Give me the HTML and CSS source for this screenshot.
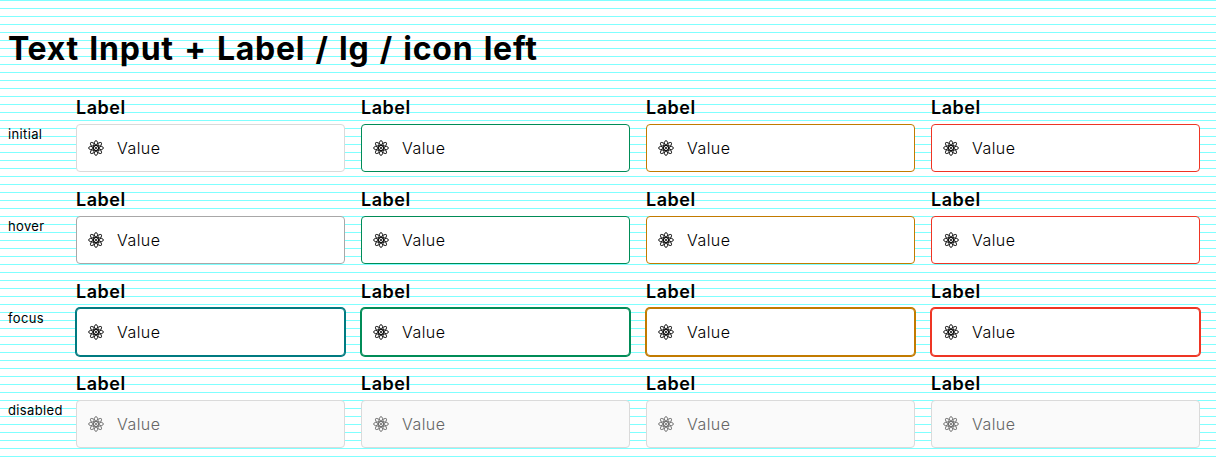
FILE: index.html
```html
<!DOCTYPE html>
<html lang="en">
<head>
<meta charset="utf-8">
<title>Text Input + Label / lg / icon left</title>
<link rel="stylesheet" href="styles.css">
</head>
<body>
<h1 class="title">Text Input + Label / lg / icon left</h1>
<main class="states" id="states"></main>
<script src="main.js"></script>
</body>
</html>
```
FILE: styles.css
```css
* { box-sizing: border-box; }

body {
  margin: 0;
  padding: 25px 16px 0 8px;
  height: 464px;
  overflow: hidden;
  font-family: Inter, "Noto Sans", sans-serif;
  color: #000;
  background: #fff repeating-linear-gradient(#80ffff 0 1px, #fff 1px 8px);
}

.title {
  margin: 0 0 23px;
  font-size: 32px;
  line-height: 48px;
  font-weight: 750;
  letter-spacing: 0.75px;
  word-spacing: 2px;
  white-space: nowrap;
}

.states { display: grid; gap: 16px; }

.row {
  display: grid;
  grid-template-columns: 68px 1fr;
  align-items: center;
}

.state-name { font-size: 13px; line-height: 20px; letter-spacing: 0.35px; }

.fields { display: grid; grid-template-columns: repeat(4, 1fr); gap: 16px; }

.label {
  display: block;
  margin-bottom: 4px;
  font-size: 18px;
  line-height: 24px;
  font-weight: 600;
  letter-spacing: 0.5px;
}

.control {
  display: flex;
  align-items: center;
  gap: 13px;
  height: 48px;
  padding-left: 11px;
  border: 1px solid #dadada;
  border-radius: 4px;
  background: #fff;
  font-size: 16px;
  font-weight: 350;
  letter-spacing: 0.45px;
}

.icon { width: 16px; height: 16px; }

.hover .control { border-color: #a8a8a8; }
.focus .control { border-color: #007a80; box-shadow: 0 0 0 1px #007a80; }

.control.success { border-color: #008c57; }
.control.warning { border-color: #c27b00; }
.control.critical { border-color: #ee3524; }

.focus .success { box-shadow: 0 0 0 1px #008c57; }
.focus .warning { box-shadow: 0 0 0 1px #c27b00; }
.focus .critical { box-shadow: 0 0 0 1px #ee3524; }

.disabled .control { border-color: #dadada; background: #fafafa; color: #666; }
```
FILE: main.js
```js
const icon = `<svg class="icon" viewBox="0 0 16 16" fill="none" stroke="currentColor" stroke-width=".9">
  <ellipse cx="8" cy="8" rx="7.5" ry="2.35"/>
  <ellipse cx="8" cy="8" rx="7.5" ry="2.35" transform="rotate(45 8 8)"/>
  <ellipse cx="8" cy="8" rx="7.5" ry="2.35" transform="rotate(90 8 8)"/>
  <ellipse cx="8" cy="8" rx="7.5" ry="2.35" transform="rotate(135 8 8)"/>
  <circle cx="8" cy="8" r="1" fill="currentColor" stroke="none"/>
</svg>`;

const field = (tone) => `<div class="field">
  <span class="label">Label</span>
  <div class="control ${tone}">${icon}<span class="value">Value</span></div>
</div>`;

document.getElementById("states").innerHTML = ["initial", "hover", "focus", "disabled"]
  .map((state) => `<section class="row ${state}">
    <span class="state-name">${state}</span>
    <div class="fields">${["neutral", "success", "warning", "critical"].map(field).join("")}</div>
  </section>`)
  .join("");
```
